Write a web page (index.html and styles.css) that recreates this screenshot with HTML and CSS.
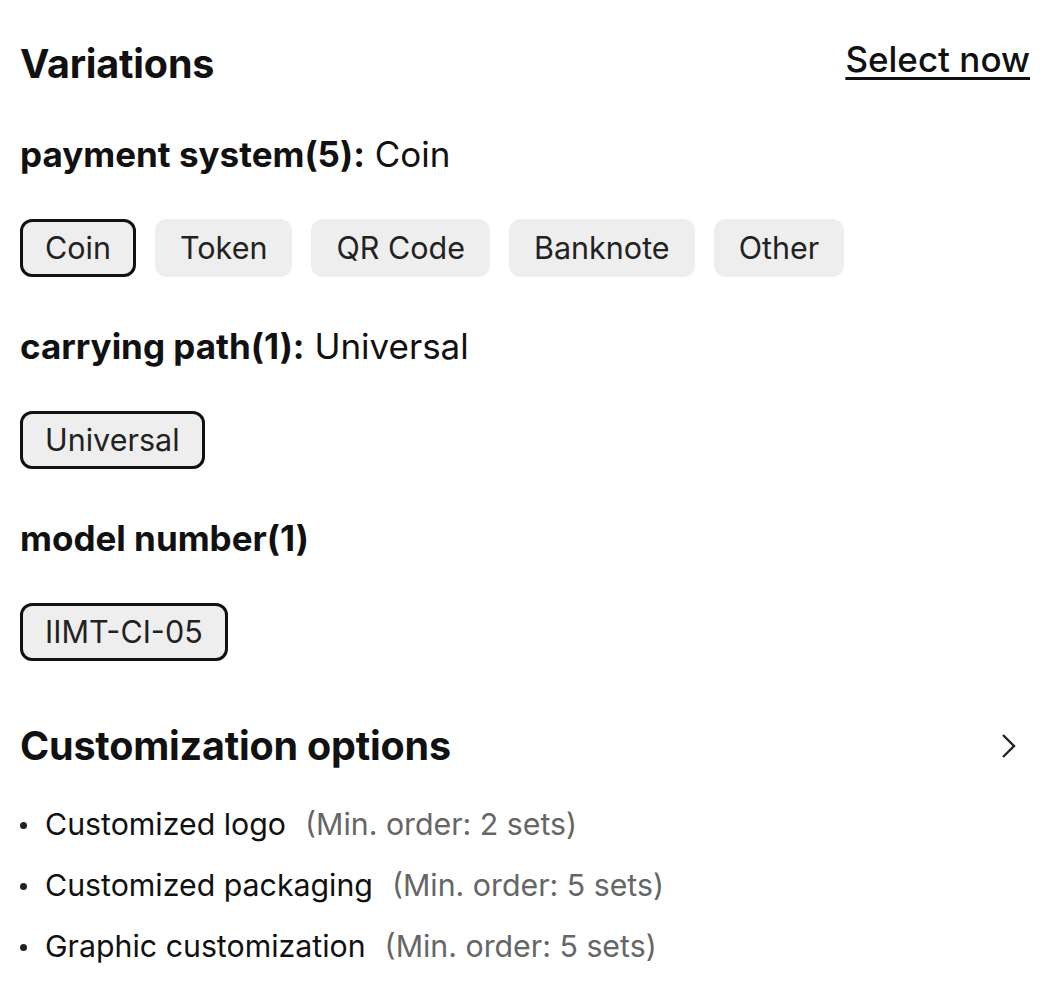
FILE: index.html
```html
<!DOCTYPE html>
<html>
<head>
<meta charset="utf-8">
<link rel="stylesheet" href="styles.css">
</head>
<body>
<div class="page">
  <div class="head-row">
    <h2 class="title">Variations</h2>
    <a class="select-now" href="#">Select now</a>
  </div>

  <div class="group first">
    <div class="label"><b>payment system(5):</b> Coin</div>
    <div class="chips">
      <span class="chip selected">Coin</span>
      <span class="chip">Token</span>
      <span class="chip">QR Code</span>
      <span class="chip">Banknote</span>
      <span class="chip">Other</span>
    </div>
  </div>

  <div class="group">
    <div class="label"><b>carrying path(1):</b> Universal</div>
    <div class="chips">
      <span class="chip selected">Universal</span>
    </div>
  </div>

  <div class="group">
    <div class="label"><b>model number(1)</b></div>
    <div class="chips">
      <span class="chip selected">IIMT-CI-05</span>
    </div>
  </div>

  <div class="head-row custom-head">
    <h2 class="title">Customization options</h2>
    <svg class="chev" width="16" height="26" viewBox="0 0 16 26"><path d="M2 2 L13 13 L2 24" fill="none" stroke="#222" stroke-width="2.4"/></svg>
  </div>

  <ul class="options">
    <li><span class="opt">Customized logo</span><span class="min">(Min. order: 2 sets)</span></li>
    <li><span class="opt">Customized packaging</span><span class="min">(Min. order: 5 sets)</span></li>
    <li><span class="opt">Graphic customization</span><span class="min">(Min. order: 5 sets)</span></li>
  </ul>
</div>
</body>
</html>
```

FILE: styles.css
```css
html, body {
  margin: 0;
  padding: 0;
  background: #fff;
}
body {
  font-family: Inter, "Noto Sans", "Liberation Sans", sans-serif;
  color: #111;
}
.page {
  padding: 40px 30px 0 20px;
}
.head-row {
  display: flex;
  justify-content: space-between;
  align-items: center;
}
.title {
  margin: 0;
  font-size: 39.5px;
  font-weight: 700;
  line-height: 48px;
  letter-spacing: -0.2px;
}
.select-now {
  font-size: 35px;
  font-weight: 500;
  color: #111;
  text-decoration: underline;
  text-underline-offset: 5px;
  text-decoration-thickness: 3px;
  align-self: flex-start;
  line-height: 38px;
}
.group {
  margin-top: 45px;
}
.group.first {
  margin-top: 42px;
}
.label {
  font-size: 35px;
  line-height: 48px;
  color: #111;
}
.label b {
  font-weight: 700;
}
.chips {
  display: flex;
  flex-wrap: wrap;
  gap: 19px;
  margin-top: 41px;
}
.chip {
  display: inline-block;
  background: #eeeeee;
  border: 3px solid transparent;
  border-radius: 12px;
  padding: 9px 22px;
  font-size: 30.5px;
  line-height: 34px;
  color: #222;
}
.chip.selected {
  border-color: #111;
}
.custom-head {
  margin-top: 61px;
}
.chev {
  margin-right: 13px;
}
.options {
  list-style: none;
  margin: 24px 0 0 0;
  padding: 0;
}
.options li {
  position: relative;
  padding-left: 25px;
  font-size: 30.3px;
  line-height: 61px;
  color: #111;
}
.options li::before {
  content: "";
  position: absolute;
  left: 0;
  top: 28px;
  width: 7px;
  height: 7px;
  border-radius: 50%;
  background: #222;
}
.min {
  color: #666;
  margin-left: 19px;
}
```
